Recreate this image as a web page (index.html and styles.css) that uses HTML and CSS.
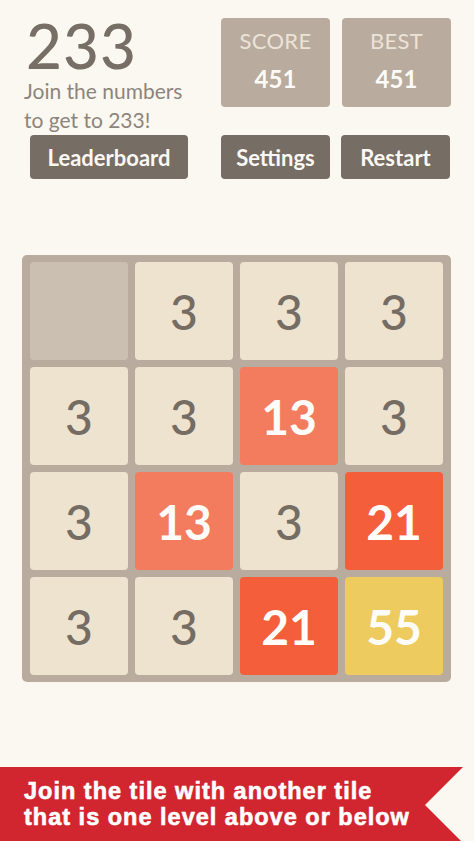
FILE: index.html
```html
<!DOCTYPE html>
<html>
<head>
<meta charset="utf-8">
<link rel="stylesheet" href="styles.css">
</head>
<body>
<div class="page">
  <header class="top">
    <div class="intro">
      <h1 class="title">233</h1>
      <p class="subtitle">Join the numbers<br>to get to 233!</p>
    </div>
    <div class="scores">
      <div class="score-box"><div class="score-label">SCORE</div><div class="score-value">451</div></div>
      <div class="score-box"><div class="score-label">BEST</div><div class="score-value">451</div></div>
    </div>
  </header>
  <nav class="buttons">
    <div class="btn btn-wide">Leaderboard</div>
    <div class="btn-group">
      <div class="btn">Settings</div>
      <div class="btn">Restart</div>
    </div>
  </nav>
  <section class="board">
    <div class="tile empty"></div>
    <div class="tile t3">3</div>
    <div class="tile t3">3</div>
    <div class="tile t3">3</div>
    <div class="tile t3">3</div>
    <div class="tile t3">3</div>
    <div class="tile t13">13</div>
    <div class="tile t3">3</div>
    <div class="tile t3">3</div>
    <div class="tile t13">13</div>
    <div class="tile t3">3</div>
    <div class="tile t21">21</div>
    <div class="tile t3">3</div>
    <div class="tile t3">3</div>
    <div class="tile t21">21</div>
    <div class="tile t55">55</div>
  </section>
  <div class="banner">Join the tile with another tile<br>that is one level above or below</div>
</div>
</body>
</html>
```
FILE: styles.css
```css
* { box-sizing: border-box; }
html, body { margin: 0; padding: 0; }
body {
  background: #faf8f0;
  font-family: Lato, "Open Sans", sans-serif;
  width: 474px;
  height: 841px;
  overflow: hidden;
}
.page { display: flex; flex-direction: column; }
.top {
  display: flex;
  padding-top: 18px;
  height: 135px;
}
.intro { width: 221px; padding-left: 24px; margin-top: -4px; }
.title {
  margin: 0;
  font-size: 62px;
  font-weight: 500;
  color: #776e65;
  line-height: 62px;
  height: 58px;
  padding-left: 2px;
  letter-spacing: 1px;
}
.subtitle {
  margin: 4px 0 0;
  font-size: 21px;
  line-height: 29px;
  color: #8d857d;
  font-weight: 400;
}
.scores { display: flex; gap: 12px; }
.score-box {
  width: 109px;
  height: 89px;
  background: #b9ab9e;
  border-radius: 4px;
  display: flex;
  flex-direction: column;
  align-items: center;
}
.score-label {
  margin-top: 10px;
  font-size: 22px;
  line-height: 26px;
  color: #ece3d8;
  letter-spacing: 0.3px;
}
.score-value {
  margin-top: 11px;
  font-size: 24px;
  line-height: 28px;
  font-weight: 700;
  color: #fdfbf7;
}
.buttons {
  display: flex;
  height: 44px;
  padding-left: 30px;
}
.btn-group { display: flex; gap: 11px; margin-left: 33px; }
.btn {
  width: 109px;
  height: 44px;
  background: #766d65;
  border-radius: 4px;
  color: #fbf8f3;
  font-size: 22px;
  font-weight: 700;
  display: flex;
  align-items: center;
  justify-content: center;
}
.btn-wide { width: 158px; }
.board {
  margin: 76px 0 0 22px;
  width: 429px;
  height: 427px;
  background: #b9ab9e;
  border-radius: 5px;
  padding: 7px 8px;
  display: grid;
  grid-template-columns: repeat(4, 98px);
  grid-template-rows: repeat(4, 98px);
  gap: 7px;
}
.tile {
  border-radius: 4px;
  display: flex;
  align-items: center;
  justify-content: center;
  font-size: 48px;
  font-weight: 500;
}
.empty { background: #cbbfb1; }
.t3 { background: #ede3cf; color: #756c63; }
.t13 { background: #f47c5e; color: #fffdfa; font-weight: 700; }
.t21 { background: #f45e3b; color: #fffdfa; font-weight: 700; }
.t55 { background: #edcb5f; color: #fffdfa; font-weight: 700; }
.banner {
  margin-top: 85px;
  width: 463px;
  height: 76px;
  background: #d1262f;
  clip-path: polygon(0 0, 100% 0, calc(100% - 38px) 50%, 100% 100%, 0 100%);
  color: #ffffff;
  font-family: "Liberation Sans", Arial, sans-serif;
  font-weight: 700;
  font-size: 23.5px;
  line-height: 26px;
  padding: 11px 0 0 24px;
  letter-spacing: 1px;
  -webkit-text-stroke: 0.6px #ffffff;
}
```
